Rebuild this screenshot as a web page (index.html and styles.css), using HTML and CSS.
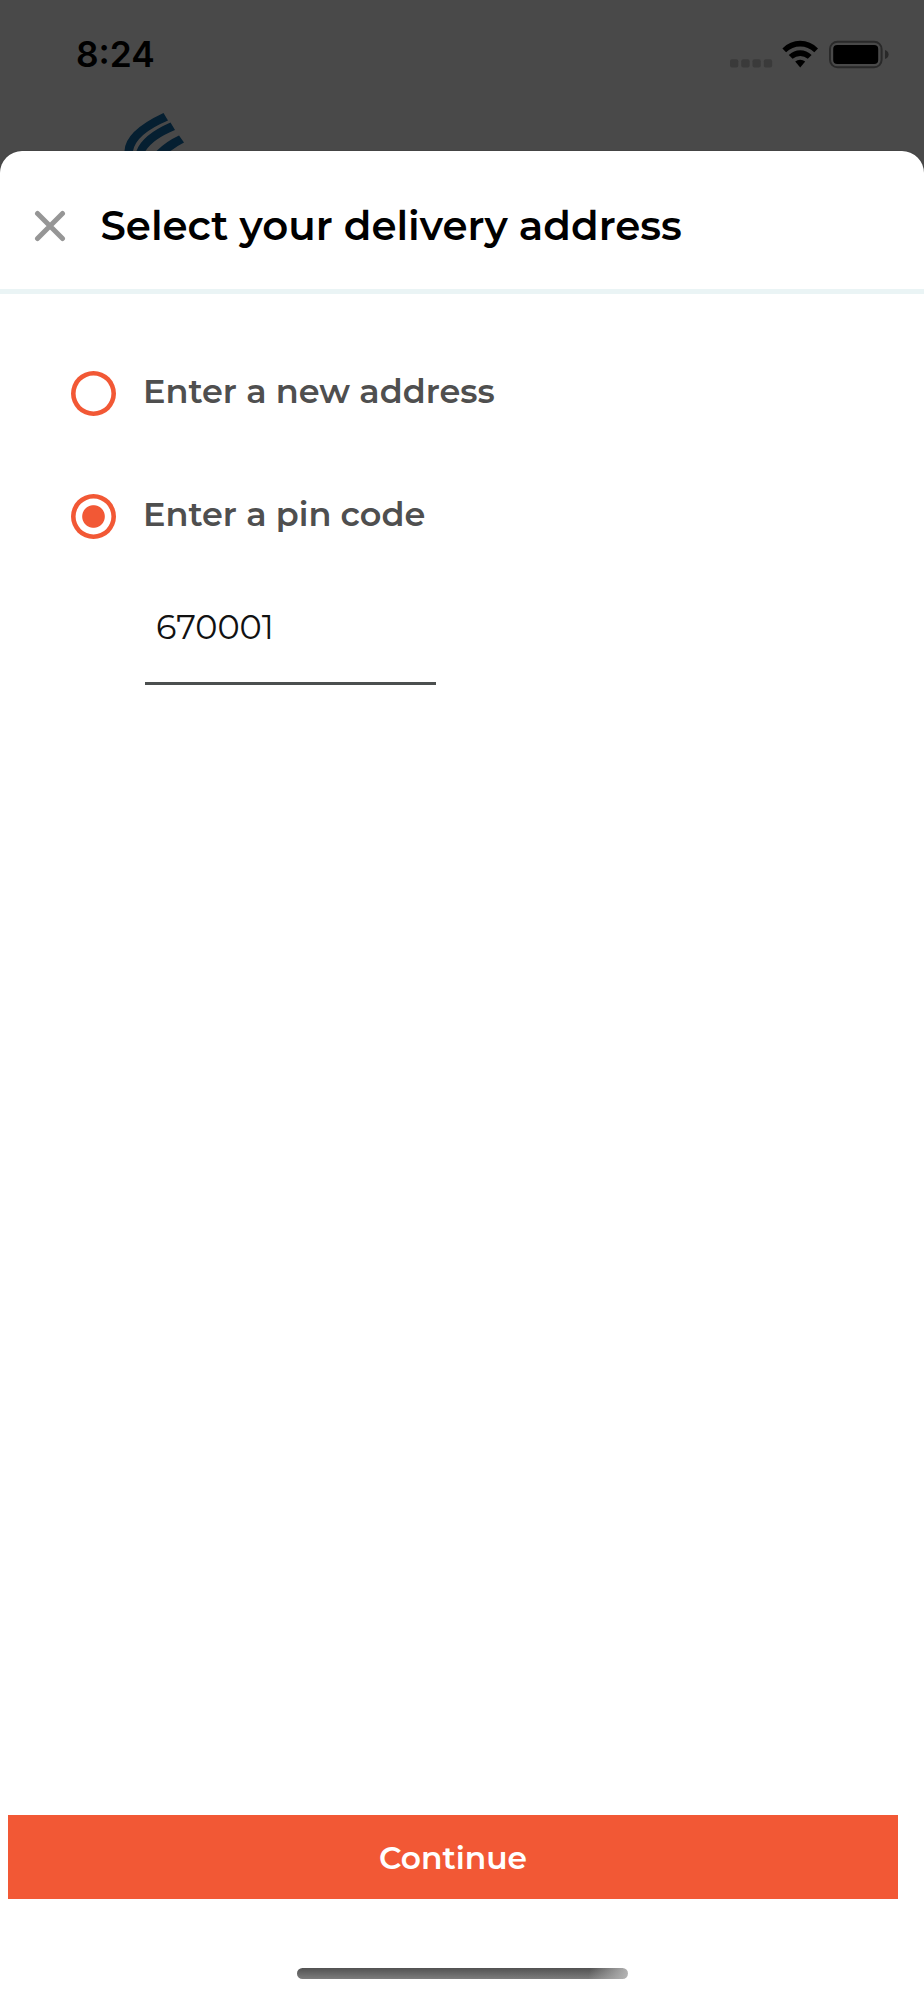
FILE: index.html
```
<!DOCTYPE html>
<html>
<head>
  <meta charset="UTF-8">
  <title>Delivery address</title>
  <meta name="viewport" content="width=device-width, initial-scale=1.0">
  <link rel="stylesheet" href="styles.css">
</head>
<body>
  <div class="status-bar">
    <span class="time">8:24</span>
    <svg class="status-icons" width="160" height="30" viewBox="729 39 160 30">
      <!-- signal -->
      <g fill="#3a3a3a">
        <rect x="730" y="59.3" width="8.3" height="8.3" rx="2"/>
        <rect x="741.3" y="59.3" width="8.3" height="8.3" rx="2"/>
        <rect x="752.5" y="59.3" width="8.3" height="8.3" rx="2"/>
        <rect x="763.8" y="59.3" width="8.3" height="8.3" rx="2"/>
      </g>
      <!-- wifi -->
      <path d="M782.4 48.4Q790 40.8 800.2 40.8T818 48.4L814.3 52.2Q808.2 46.6 800.2 46.6T786.1 52.2Z"/>
      <path d="M788.8 55Q793.7 50.3 800.2 50.3T811.6 55L807.8 58.8Q804.5 55.9 800.2 55.9T792.6 58.8Z"/>
      <path d="M795.2 61.6Q797.3 59.7 800.2 59.7T805.2 61.6L800.2 67.4Z"/>
      <!-- battery -->
      <rect x="830" y="41.7" width="51.6" height="25.6" rx="7.5" fill="none" stroke="#292929" stroke-width="2"/>
      <rect x="833.2" y="45" width="45" height="19" rx="4"/>
      <path d="M885 50Q888.6 51.4 888.6 54.5T885 59Z" fill="#292929"/>
    </svg>
  </div>

  <div class="backdrop">
    <svg width="66" height="40" viewBox="122 111 66 40" fill="#051f31">
      <path d="M163.5 113L168 120.5Q136 134 133 151H124.5Q125 131 163.5 113Z"/>
      <path d="M170.5 122.5L175 130Q153 139 145.5 151H136.5Q142 135 170.5 122.5Z"/>
      <path d="M179 135.5L184 142.5Q177 146 170.5 151H156.5Q166 141.5 179 135.5Z"/>
    </svg>
  </div>

  <div class="sheet">
    <div class="sheet-header">
      <svg class="close" width="32" height="32" viewBox="0 0 32 32">
        <path d="M3.5 3.5L28.5 28.5M28.5 3.5L3.5 28.5" stroke="#969696" stroke-width="5" stroke-linecap="round"/>
      </svg>
      <span class="title">Select your delivery address</span>
    </div>

    <div class="options">
      <div class="option">
        <span class="radio"></span>
        <span class="label">Enter a new address</span>
      </div>
      <div class="option">
        <span class="radio checked"></span>
        <span class="label">Enter a pin code</span>
      </div>
      <div class="pin-field"><span>670001</span></div>
    </div>

    <div class="continue"><span>Continue</span></div>
    <div class="home-indicator"></div>
  </div>
</body>
</html>
```
FILE: styles.css
```
html, body {
  height: 100%;
  margin: 0;
}

body {
  display: flex;
  flex-direction: column;
  background: #494949;
  font-family: Montserrat, Inter, sans-serif;
  overflow: hidden;
}

.status-bar {
  height: 110px;
  display: flex;
  align-items: center;
  justify-content: space-between;
  padding: 0 35px 0 76px;
  flex: none;
}

.time {
  font-family: Inter, sans-serif;
  font-size: 35.3px;
  font-weight: 600;
  line-height: 40px;
}

.status-icons {
  margin-bottom: 2px;
}

.backdrop {
  height: 40px;
  margin-top: 1px;
  padding-left: 122px;
  flex: none;
}

.backdrop svg {
  display: block;
}

.sheet {
  flex: 1;
  display: flex;
  flex-direction: column;
  background: #fff;
  border-radius: 22px 22px 0 0;
  box-shadow: 0 0 1px #222;
}

.sheet-header {
  display: flex;
  align-items: center;
  height: 126px;
  padding: 12px 34px 0;
  border-bottom: 5px solid #eaf4f5;
}

.title {
  margin-left: 34.5px;
  font-size: 40.3px;
  font-weight: 600;
  line-height: 48px;
  white-space: nowrap;
}

.options {
  flex: 1;
  padding: 77px 71px 0;
}

.option {
  display: flex;
  align-items: center;
  height: 45px;
  margin-bottom: 78px;
}

.radio {
  width: 45px;
  height: 45px;
  border-radius: 50%;
  box-shadow: inset 0 0 0 4.6px #f25835;
  flex: none;
}

.checked {
  background: radial-gradient(circle, #f25835 10.8px, #fff 11.8px);
}

.label {
  margin: 0 0 6px 27px;
  color: #4f4f4f;
  font-size: 33.5px;
  font-weight: 600;
  line-height: 40px;
  white-space: nowrap;
}

.pin-field {
  box-sizing: border-box;
  width: 291px;
  height: 91px;
  margin: -23px 0 0 74px;
  padding: 13px 0 0 11px;
  border-bottom: 3px solid #4b4f4f;
  color: #111;
  font-size: 33.5px;
  line-height: 40px;
}

.continue {
  display: flex;
  align-items: center;
  justify-content: center;
  height: 84px;
  margin: 0 26px 0 8px;
  background: #f25835;
  color: #fff;
  font-size: 31.3px;
  font-weight: 600;
  line-height: 38px;
}

.continue span {
  padding-top: 1px;
}

.home-indicator {
  width: 331px;
  height: 11px;
  margin: 69px 0 21px 297px;
  border-radius: 6px;
  background: linear-gradient(100deg, transparent 88%, #b5b5b5), linear-gradient(#525252, #7c7c7c);
}
```
